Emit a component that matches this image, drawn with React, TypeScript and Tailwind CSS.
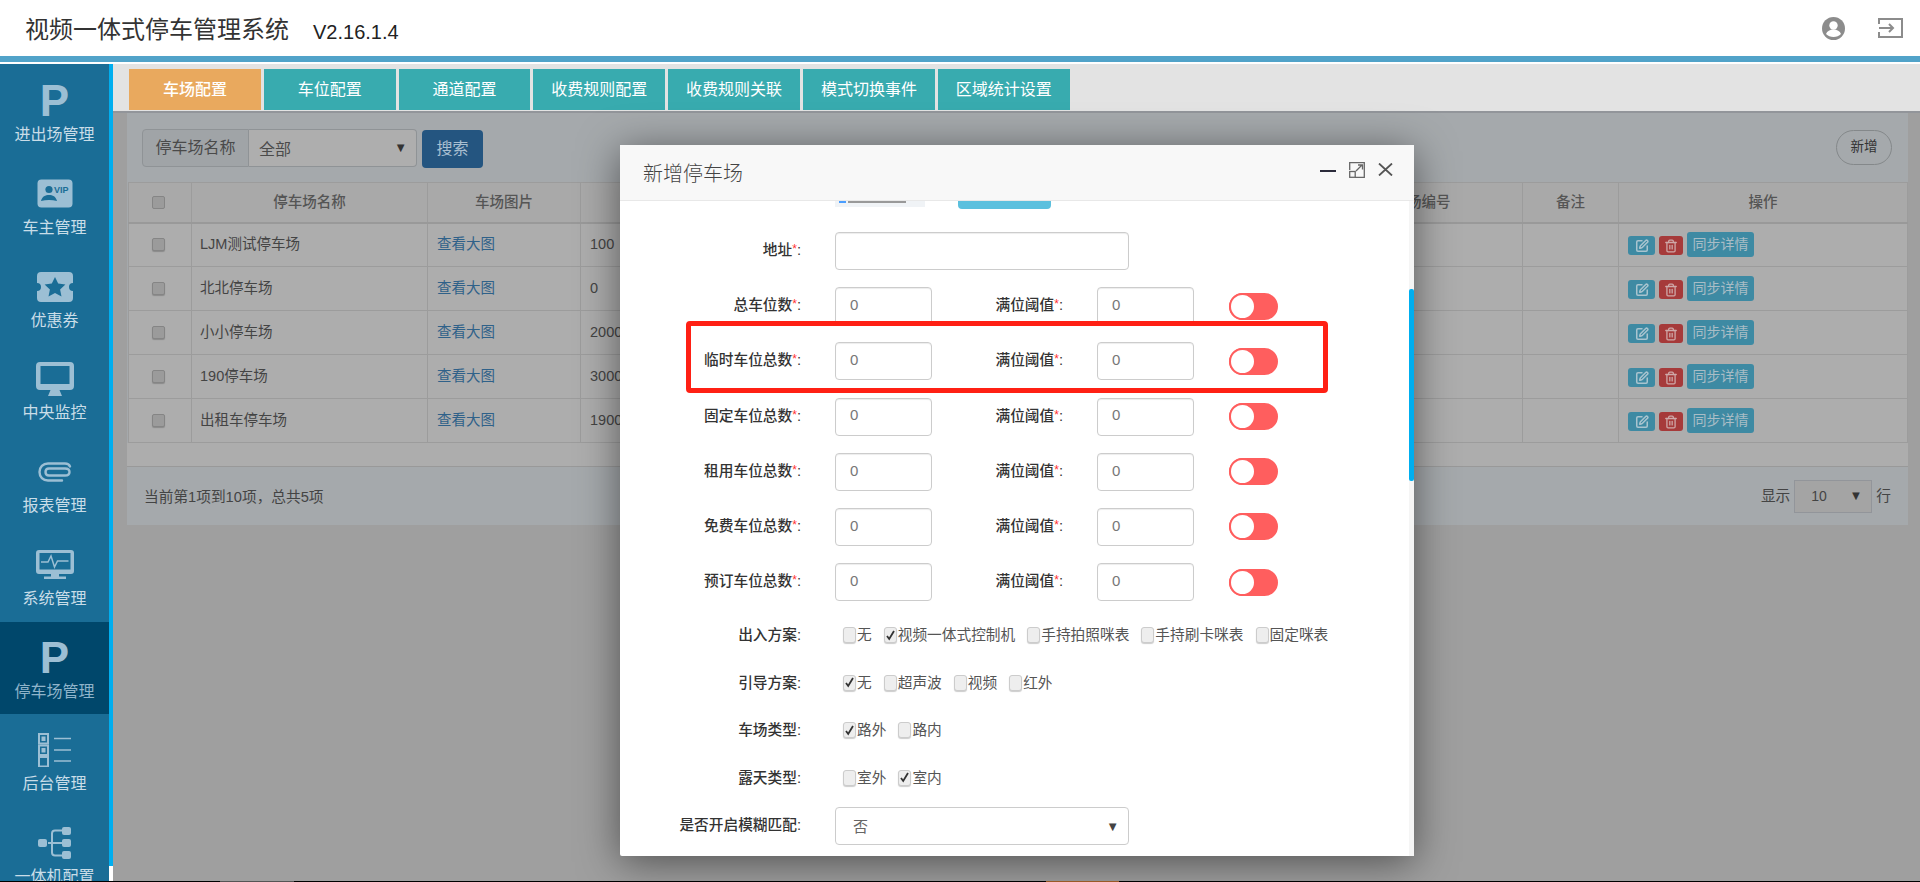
import { ReactNode } from 'react'
import { SquarePen, Trash2 } from 'lucide-react'

const iconCls = 'fill-[#9cbfd4]'

function VipIcon() {
  return (
    <svg width="36" height="29" viewBox="0 0 36 29">
      <rect x="0.5" y="0.5" width="35" height="28" rx="4" fill="#9cbfd4" />
      <circle cx="12" cy="10.5" r="3.6" fill="#1a6d96" />
      <path d="M4 22c1-4.5 4.500-6 8-6s7 1.500 8 6c-5-1.500-11-1.500-16 0z" fill="#1a6d96" />
      <text x="17" y="13.500" fontSize="9" fontWeight="700" fill="#1a6d96" fontFamily="Liberation Sans, sans-serif">VIP</text>
    </svg>
  )
}

function TicketIcon() {
  return (
    <svg width="36" height="30" viewBox="0 0 36 30">
      <path className={iconCls} d="M4 0h28a4 4 0 0 1 4 4v7a4 4 0 0 0 0 8v7a4 4 0 0 1-4 4H4a4 4 0 0 1-4-4v-7a4 4 0 0 0 0-8V4a4 4 0 0 1 4-4z" />
      <path fill="#1a6d96" d="M18 5l3.200 6.600 7.200.9-5.300 4.900 1.400 7.100-6.500-3.600-6.500 3.600 1.400-7.100-5.300-4.900 7.200-.9z" />
    </svg>
  )
}

function MonitorIcon() {
  return (
    <svg width="38" height="34" viewBox="0 0 38 34">
      <path className={iconCls} fillRule="evenodd" d="M4 0h30a4 4 0 0 1 4 4v20a4 4 0 0 1-4 4H23.500l2.500 6H12l2.500-6H4a4 4 0 0 1-4-4V4a4 4 0 0 1 4-4zm.5 4v18h29V4z" />
    </svg>
  )
}

function ClipIcon() {
  return (
    <svg width="34" height="20" viewBox="0 0 34 20" fill="none" stroke="#9cbfd4" strokeWidth="2.400" strokeLinecap="round">
      <path d="M32 4.500C31 2 29 1.500 27 1.500H10C5 1.500 1.500 5 1.500 10s3.500 8.500 8.500 8.500h14" />
      <path d="M27 13.500H11c-2 0-3.500-1.500-3.500-3.500S9 6.500 11 6.500h16c2.500 0 4.500 1 4.500 3.500s-2 3.500-4.500 3.500" />
    </svg>
  )
}

function PulseIcon() {
  return (
    <svg width="38" height="29" viewBox="0 0 38 29">
      <path className={iconCls} fillRule="evenodd" d="M3 0h32a3 3 0 0 1 3 3v18a3 3 0 0 1-3 3H3a3 3 0 0 1-3-3V3a3 3 0 0 1 3-3zm.5 3v16.500h31V3z" />
      <rect x="8" y="26.500" width="22" height="2.500" fill="#9cbfd4" />
      <rect x="15" y="24" width="8" height="3" fill="#9cbfd4" />
      <path d="M5 12h7l3-6 3.500 11 3-6h11" fill="none" stroke="#9cbfd4" strokeWidth="1.500" />
    </svg>
  )
}

function ListIcon() {
  return (
    <svg width="34" height="34" viewBox="0 0 34 34" fill="none" stroke="#9cbfd4">
      <rect x="1" y="1" width="9" height="9.500" strokeWidth="2" />
      <rect x="3.500" y="3.500" width="4" height="4.500" fill="#9cbfd4" strokeWidth="0" />
      <rect x="1" y="12.500" width="9" height="9.500" strokeWidth="2" />
      <rect x="3.500" y="15" width="4" height="4.500" fill="#9cbfd4" strokeWidth="0" />
      <rect x="1" y="24" width="9" height="9.500" strokeWidth="2" />
      <path d="M16 5.500h17M16 17h17M16 28h17" strokeWidth="1.600" />
    </svg>
  )
}

function NetworkIcon() {
  return (
    <svg width="33" height="32" viewBox="0 0 33 32">
      <path d="M10 16h14M14 16V6.500c0-2 1-3 3-3h7M14 16v9.500c0 2 1 3 3 3h7" fill="none" stroke="#9cbfd4" strokeWidth="2" />
      <rect x="0" y="12" width="9" height="8" rx="2" fill="#9cbfd4" />
      <rect x="24" y="0" width="9" height="8" rx="2" fill="#9cbfd4" />
      <rect x="24" y="12" width="9" height="8" rx="2" fill="#9cbfd4" />
      <rect x="24" y="24" width="9" height="8" rx="2" fill="#9cbfd4" />
    </svg>
  )
}

function ParkIcon() {
  return <span className="text-[44px] leading-none font-bold text-[#9cbfd4]">P</span>
}

const menu: { label: string; icon: ReactNode; active?: boolean }[] = [
  { label: '进出场管理', icon: <ParkIcon /> },
  { label: '车主管理', icon: <VipIcon /> },
  { label: '优惠券', icon: <TicketIcon /> },
  { label: '中央监控', icon: <MonitorIcon /> },
  { label: '报表管理', icon: <ClipIcon /> },
  { label: '系统管理', icon: <PulseIcon /> },
  { label: '停车场管理', icon: <ParkIcon />, active: true },
  { label: '后台管理', icon: <ListIcon /> },
  { label: '一体机配置', icon: <NetworkIcon /> },
]

const tabs = ['车场配置', '车位配置', '通道配置', '收费规则配置', '收费规则关联', '模式切换事件', '区域统计设置']

const lots = [
  { name: 'LJM测试停车场', total: '100' },
  { name: '北北停车场', total: '0' },
  { name: '小小停车场', total: '2000' },
  { name: '190停车场', total: '3000' },
  { name: '出租车停车场', total: '1900' },
]

const capacityRows = ['总车位数', '临时车位总数', '固定车位总数', '租用车位总数', '免费车位总数', '预订车位总数']

const checkRows = [
  { label: '出入方案', items: [['无', false], ['视频一体式控制机', true], ['手持拍照咪表', false], ['手持刷卡咪表', false], ['固定咪表', false]] },
  { label: '引导方案', items: [['无', true], ['超声波', false], ['视频', false], ['红外', false]] },
  { label: '车场类型', items: [['路外', true], ['路内', false]] },
  { label: '露天类型', items: [['室外', false], ['室内', true]] },
] as { label: string; items: [string, boolean][] }[]

function Required({ text }: { text: string }) {
  return (
    <>
      {text}
      <span className="text-[#f33] text-[12px] relative -top-[2px]">*</span>:
    </>
  )
}

function Toggle() {
  return (
    <div className="ml-[35px] w-[49px] h-[27px] rounded-full bg-[#ff5e5e] flex items-center">
      <div className="w-[27px] h-[27px] rounded-full bg-white border-2 border-[#ff5e5e]" />
    </div>
  )
}

function NumberBox() {
  return (
    <div className="w-[97px] h-[38px] ml-[34px] flex items-center pl-[14px] pb-[2px] text-[15px] text-[#777] border border-[#ccc] rounded-[4px] shadow-[inset_0_1px_1px_rgba(0,0,0,0.075)]">
      0
    </div>
  )
}

function Tick({ checked }: { checked: boolean }) {
  return (
    <span className="w-[13px] h-[16px] shrink-0 flex items-center justify-center bg-[#eee] border border-[#ccc] rounded-[3px] shadow-[0_1px_1px_rgba(0,0,0,0.2)]">
      {checked && (
        <svg width="9" height="11" viewBox="0 0 9 11">
          <path d="M1 6l2.200 3L8 1" fill="none" stroke="#333" strokeWidth="1.800" />
        </svg>
      )}
    </span>
  )
}

function Modal() {
  return (
    <div className="absolute left-[620px] top-[145px] w-[794px] h-[711px] bg-white rounded-[2px] flex flex-col shadow-[0_6px_40px_rgba(0,0,0,0.5)]">
      <div className="h-[56px] shrink-0 bg-[#f8f8f8] border-b border-[#e8e8e8] flex items-center pl-[23px] relative">
        <span className="text-[20px] text-[#444] font-light mt-[2px]">新增停车场</span>
        <div className="absolute left-[700px] top-[25px] w-[16px] h-[2px] bg-[#2b2b3b]" />
        <svg className="absolute left-[729px] top-[17px]" width="16" height="16" viewBox="0 0 16 16" fill="none" stroke="#666" strokeWidth="1.300">
          <path d="M.7 8V.7h14.600v14.600H6" />
          <rect x=".7" y="9.500" width="5.500" height="5.800" />
          <path d="M7 9l6-6M9 3h4.500v4.500" />
        </svg>
        <svg className="absolute left-[758px] top-[18px]" width="15" height="13" viewBox="0 0 15 13" fill="none" stroke="#555" strokeWidth="1.800">
          <path d="M1 .5l13 12M14 .5l-13 12" />
        </svg>
      </div>
      <div className="relative flex-1 overflow-hidden">
        <div className="flex h-[8px] -mt-px">
          <div className="ml-[215px] w-[90px] h-[7px] bg-[#f0f3f6] flex pl-[4px] gap-[2px]">
            <div className="w-[7px] h-[3px] bg-[#4a9eff]" />
            <div className="w-[58px] h-[3px] bg-[#999]" />
          </div>
          <div className="ml-[33px] w-[93px] h-[9px] bg-[#5bc0de] rounded-b-[4px]" />
        </div>
        <div className="flex flex-col gap-[17.200px] pt-[24px] text-[14.700px] text-[#333]">
          <div className="flex items-center h-[38px]">
            <label className="w-[181px] pb-[2px] text-right font-medium"><Required text="地址" /></label>
            <div className="w-[294px] h-[38px] ml-[34px] border border-[#ccc] rounded-[4px] shadow-[inset_0_1px_1px_rgba(0,0,0,0.075)]" />
          </div>
          {capacityRows.map((label) => (
            <div key={label} className="flex items-center h-[38px]">
              <label className="w-[181px] pb-[2px] text-right font-medium"><Required text={label} /></label>
              <NumberBox />
              <label className="w-[131px] pb-[2px] text-right font-medium"><Required text="满位阈值" /></label>
              <NumberBox />
              <Toggle />
            </div>
          ))}
        </div>
        <div className="flex flex-col gap-[25.500px] mt-[23px] text-[14.700px] text-[#333]">
          {checkRows.map((row) => (
            <div key={row.label} className="flex items-center h-[22px]">
              <label className="w-[181px] text-right font-medium">{row.label}:</label>
              <div className="flex ml-[42px] gap-[12px]">
                {row.items.map(([text, checked]) => (
                  <span key={text} className="flex items-center gap-[1px] text-[#555] whitespace-nowrap">
                    <Tick checked={checked} />
                    {text}
                  </span>
                ))}
              </div>
            </div>
          ))}
        </div>
        <div className="flex items-center h-[38px] mt-[18px] text-[14.700px] text-[#333]">
          <label className="w-[181px] pb-[2px] text-right font-medium">是否开启模糊匹配:</label>
          <div className="relative w-[294px] h-[38px] ml-[34px] flex items-center pl-[17px] pt-[3px] text-[15px] text-[#666] border border-[#ccc] rounded-[4px]">
            否
            <span className="absolute right-[9px] top-[9px] text-[13px] text-[#444]">▼</span>
          </div>
        </div>
        <div className="absolute right-0 top-0 bottom-0 w-[5px] bg-[#f5f5f5]">
          <div className="mt-[88px] h-[192px] bg-[#00aeef] rounded-[2px]" />
        </div>
      </div>
    </div>
  )
}

export default function App() {
  return (
    <div className="relative w-[1920px] h-[882px] overflow-hidden flex flex-col bg-white font-['Liberation_Sans','Noto_Sans_CJK_SC',sans-serif]">
      <header className="h-[56px] shrink-0 flex items-center pl-[25px] pr-[17px]">
        <h1 className="text-[24px] text-[#333] font-normal mt-[3px]">视频一体式停车管理系统</h1>
        <span className="ml-[24px] mt-[7px] text-[20px] text-[#222]">V2.16.1.4</span>
        <div className="ml-auto flex items-center gap-[33px]">
          <svg width="23" height="23" viewBox="0 0 23 23">
            <circle cx="11.500" cy="11.500" r="11.500" fill="#8c8c8c" />
            <circle cx="11.500" cy="8.500" r="4.200" fill="#fff" />
            <path d="M4 17c1-3 4-4.500 7.500-4.500S18 14 19 17c-2 2-4.500 3-7.500 3S6 19 4 17z" fill="#fff" />
          </svg>
          <svg width="25" height="20" viewBox="0 0 25 20" fill="none" stroke="#8c8c8c" strokeWidth="2">
            <path d="M1 6V1h23v18H1v-5" />
            <path d="M1 10h14M11 6l4 4-4 4" />
          </svg>
        </div>
      </header>
      <div className="h-[6px] shrink-0 bg-[#51a3c9]" />
      <div className="h-[2px] shrink-0" />

      <div className="flex-1 min-h-0 flex">
        <aside className="w-[113px] shrink-0 flex">
          <nav className="w-[109px] bg-[#1a6d96] pt-px overflow-hidden">
            {menu.map((item) => (
              <div
                key={item.label}
                className={`h-[92.750px] pt-[13px] flex flex-col items-center text-[16px] ${item.active ? 'bg-[#00476b] text-[#8fb4ca]' : 'text-[#c9dde8]'}`}
              >
                <div className="h-[46px] flex items-center justify-center">{item.icon}</div>
                <div className="leading-[22px] whitespace-nowrap">{item.label}</div>
              </div>
            ))}
          </nav>
          <div className="w-[4px]">
            <div className="h-[802px] bg-[#00aeef]" />
          </div>
        </aside>

        <main className="flex-1 min-w-0 flex flex-col bg-[#9f9f9f]">
          <div className="h-[47px] shrink-0 bg-[#e3e3e3] pt-[5px] pl-[16px] flex gap-[3px] items-start">
            {tabs.map((tab, i) => (
              <div
                key={tab}
                className={`w-[131.800px] h-[41px] flex items-center justify-center text-[16px] text-white whitespace-nowrap ${i === 0 ? 'bg-[#e9a95e] font-medium' : 'bg-[#38abaf]'}`}
              >
                {tab}
              </div>
            ))}
          </div>

          <div className="h-[2px] shrink-0 bg-[#92959a]" />

          <section className="ml-[14px] w-[1781px] h-[412px] bg-[#a5a9ac] flex flex-col">
            <div className="h-[69px] shrink-0 pt-[16px] pl-[15px] pr-[16px] flex items-start">
              <div className="flex h-[38px] text-[16px] text-[#4a4a4a]">
                <div className="w-[107px] flex items-center justify-center bg-[#a0a4a7] border border-[#8f9396] rounded-l-[4px]">停车场名称</div>
                <div className="relative w-[168px] flex items-center pl-[10px] pt-[4px] bg-[#aeaeae] border border-l-0 border-[#8f9396] rounded-r-[4px]">
                  全部
                  <span className="absolute right-[9px] top-[8px] text-[13px] text-[#333]">▼</span>
                </div>
              </div>
              <button className="ml-[5px] mt-px w-[61px] h-[38px] bg-[#245580] rounded-[4px] text-[16px] text-[#a9bfd1]">搜索</button>
              <button className="ml-auto w-[56px] h-[35px] mt-px rounded-full border border-[#84888a] text-[13.500px] text-[#333]">新增</button>
            </div>

            <table className="table-fixed border-collapse ml-px w-[1779px] text-[14.500px] text-[#444] bg-[#adadad]">
              <colgroup>
                <col className="w-[63px]" />
                <col className="w-[236px]" />
                <col className="w-[153px]" />
                <col className="w-[740px]" />
                <col className="w-[202px]" />
                <col className="w-[96px]" />
                <col className="w-[289px]" />
              </colgroup>
              <thead>
                <tr className="h-[40px] bg-[#a9a9a9] border-b-2 border-[#999] text-[#555]">
                  <th className="border border-[#9c9c9c]">
                    <span className="block ml-[23px] w-[13px] h-[13px] bg-[#9b9b9b] border border-[#858585] rounded-[2px]" />
                  </th>
                  {['停车场名称', '车场图片', '总车位数', '车场编号', '备注', '操作'].map((h) => (
                    <th key={h} className="border border-[#9c9c9c] font-medium pt-px">{h}</th>
                  ))}
                </tr>
              </thead>
              <tbody>
                {lots.map((lot) => (
                  <tr key={lot.name} className="h-[44px]">
                    <td className="border border-[#9c9c9c]">
                      <span className="block ml-[23px] w-[13px] h-[13px] bg-[#9b9b9b] border border-[#858585] rounded-[2px] shadow-[0_1px_1px_rgba(0,0,0,0.2)]" />
                    </td>
                    <td className="border border-[#9c9c9c] pl-[8px]">{lot.name}</td>
                    <td className="border border-[#9c9c9c] pl-[9px] text-[#2f6189]">查看大图</td>
                    <td className="border border-[#9c9c9c] pl-[9px]">{lot.total}</td>
                    <td className="border border-[#9c9c9c]" />
                    <td className="border border-[#9c9c9c]" />
                    <td className="border border-[#9c9c9c] pl-[9px]">
                      <div className="flex items-center gap-[4px]">
                        <span className="w-[27px] h-[19px] mt-[2px] bg-[#3e8aa3] rounded-[3px] flex items-center justify-center">
                          <SquarePen size={14} className="text-[#a9c4cf]" strokeWidth={2.600} />
                        </span>
                        <span className="w-[24px] h-[19px] mt-[2px] bg-[#a63a3a] rounded-[3px] flex items-center justify-center">
                          <Trash2 size={14} className="text-[#cfa9a9]" strokeWidth={2.200} />
                        </span>
                        <span className="w-[67px] h-[25px] bg-[#3e8aa3] rounded-[3px] flex items-center justify-center text-[14px] text-[#a9bdc6]">同步详情</span>
                      </div>
                    </td>
                  </tr>
                ))}
              </tbody>
            </table>

            <div className="h-[24px] shrink-0 bg-[#adadad] border-b border-[#999]" />

            <div className="flex-1 flex items-center justify-between pl-[17px] pr-[17px] text-[14.700px] text-[#444]">
              <span className="mt-[2px]">当前第1项到10项，总共5项</span>
              <div className="flex items-center gap-[4px]">
                显示
                <div className="relative w-[78px] h-[33px] flex items-center pl-[16px] bg-[#a4a4a4] border border-[#92959a] text-[14px]">
                  10
                  <span className="absolute right-[9px] top-[5px] text-[13px] text-[#333]">▼</span>
                </div>
                行
              </div>
            </div>
          </section>
        </main>
      </div>

      <div className="h-px shrink-0 bg-black flex">
        <div className="ml-[220px] w-[74px] bg-[#555]" />
        <div className="ml-[752px] w-[73px] bg-[#a8622a]" />
      </div>

      <Modal />

      <div className="absolute left-[686px] top-[321px] w-[642px] h-[72px] border-[5px] border-[#ff2014] rounded-[4px]" />
    </div>
  )
}
